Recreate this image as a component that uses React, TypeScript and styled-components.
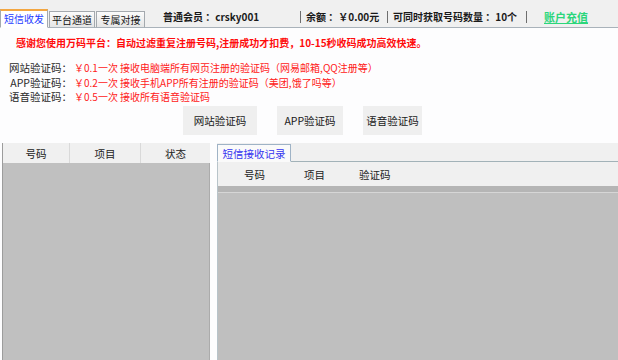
import React from 'react'
import styled, { createGlobalStyle } from 'styled-components'

const GlobalStyle = createGlobalStyle`
  html, body {
    margin: 0;
    padding: 0;
    background: #ffffff;
  }
  body {
    font-family: 'Noto Sans CJK SC', 'Liberation Sans', sans-serif;
  }
`

const Window = styled.div`
  width: 618px;
  height: 360px;
  display: flex;
  flex-direction: column;
  overflow: hidden;
  background: #fdfdfe;
`

const TopBar = styled.div`
  height: 27px;
  flex: none;
  display: flex;
  align-items: flex-end;
  background: #f0f0f0;
  border-bottom: 1px solid #a9b2ba;
`

const Tabs = styled.div`
  display: flex;
  align-items: flex-end;
  margin-bottom: -1px;
`

const Tab = styled.div<{ $active?: boolean; $w: number }>`
  width: ${(p) => p.$w}px;
  box-sizing: border-box;
  height: ${(p) => (p.$active ? 19 : 17)}px;
  margin-right: 1px;
  display: flex;
  align-items: center;
  justify-content: center;
  font-size: 10px;
  line-height: 12px;
  color: ${(p) => (p.$active ? '#1e3cff' : '#111')};
  background: ${(p) => (p.$active ? '#ffffff' : 'linear-gradient(#fbfbfb, #e6e6e6)')};
  border: 1px solid #a4a9ae;
  border-top: ${(p) => (p.$active ? '2px solid #f3a640' : '1px solid #a4a9ae')};
  border-bottom: ${(p) => (p.$active ? '1px solid #ffffff' : '1px solid #a9b2ba')};
`

const Status = styled.div`
  display: flex;
  align-items: center;
  height: 18px;
  margin-left: 17px;
  margin-bottom: 1px;
`

const StatusItem = styled.div<{ $w: number }>`
  width: ${(p) => p.$w}px;
  font-size: 10px;
  font-weight: 700;
  line-height: 14px;
  color: #1a1a1a;
  white-space: nowrap;
`

const Pipe = styled.span`
  width: 1px;
  height: 12px;
  margin: 0 5px 0 2px;
  background: #6e6e6e;
`

const Recharge = styled.a`
  margin-left: 12px;
  font-size: 11px;
  font-weight: 700;
  line-height: 14px;
  color: #2bd67b;
  text-decoration: underline;
  cursor: pointer;
`

const Info = styled.div`
  height: 115px;
  flex: none;
  box-sizing: border-box;
  padding-top: 8px;
  background: #fdfdfe;
`

const Notice = styled.div`
  padding-left: 16px;
  font-size: 10px;
  font-weight: 700;
  line-height: 14px;
  color: #ff0c0c;
  white-space: nowrap;
`

const Prices = styled.div`
  margin-top: 11px;
  display: grid;
  grid-template-columns: 72px auto;
  column-gap: 2px;
  line-height: 14.5px;
`

const PriceLabel = styled.div`
  font-size: 10.5px;
  color: #2a2a2a;
  text-align: right;
  white-space: nowrap;
`

const PriceText = styled.div`
  font-size: 10px;
  color: #ff2020;
  white-space: nowrap;
`

const Buttons = styled.div`
  display: flex;
  gap: 20px;
  margin-top: 1px;
  padding-left: 183px;
`

const Button = styled.button<{ $w: number }>`
  width: ${(p) => p.$w}px;
  height: 29px;
  padding: 0;
  border: none;
  background: #efefef;
  font-family: inherit;
  font-size: 10.5px;
  color: #1a1a1a;
  cursor: pointer;
`

const Bottom = styled.div`
  flex: 1;
  display: flex;
  gap: 7px;
  min-height: 0;
`

const LeftPanel = styled.div`
  width: 207px;
  margin-left: 2px;
  display: flex;
  flex-direction: column;
  border-left: 1px solid #9c9c9c;
`

const Header = styled.div`
  height: 20px;
  flex: none;
  display: flex;
  background: #f0f0f0;
`

const HeadCell = styled.div<{ $w: number }>`
  width: ${(p) => p.$w}px;
  box-sizing: border-box;
  display: flex;
  align-items: center;
  justify-content: center;
  font-size: 10.5px;
  color: #222;
  border-right: 1px solid #d9d9d9;
  &:last-child {
    border-right: none;
  }
`

const ListBody = styled.div`
  flex: 1;
  background: #c0c0c0;
  border-right: 1px solid #ababab;
`

const RightPanel = styled.div`
  flex: 1;
  display: flex;
  flex-direction: column;
`

const TabStrip = styled.div`
  height: 18px;
  flex: none;
  display: flex;
  align-items: flex-end;
  background: #f0f0f0;
`

const PanelTab = styled.div`
  width: 74px;
  height: 18px;
  box-sizing: border-box;
  display: flex;
  align-items: center;
  justify-content: center;
  margin-bottom: -1px;
  font-size: 10.5px;
  color: #3434f0;
  background: #fafafa;
  border: 1px solid #9fb3c6;
  border-bottom: 1px solid #fafafa;
  position: relative;
`

const PanelBody = styled.div`
  flex: 1;
  display: flex;
  flex-direction: column;
  border-top: 1px solid #a2b2b8;
  border-left: 1px solid #b8c4ca;
`

const RecordHeader = styled.div`
  height: 24px;
  flex: none;
  display: flex;
  align-items: center;
  background: #f0f0f0;
  font-size: 10.5px;
  color: #222;
`

const RecordCell = styled.div<{ $w?: number; $pad?: number }>`
  box-sizing: border-box;
  width: ${(p) => (p.$w ? `${p.$w}px` : 'auto')};
  padding-left: ${(p) => p.$pad || 0}px;
`

const Band = styled.div`
  height: 6px;
  flex: none;
  background: #b5b5b5;
  border-bottom: 1px solid #d6d6d6;
`

const RecordBody = styled.div`
  flex: 1;
  background: #bfbfbf;
`

const prices = [
  { label: '网站验证码：', text: '￥0.1一次  接收电脑端所有网页注册的验证码（网易邮箱,QQ注册等）' },
  { label: 'APP验证码：', text: '￥0.2一次  接收手机APP所有注册的验证码（美团,饿了吗等）' },
  { label: '语音验证码：', text: '￥0.5一次  接收所有语音验证码' },
]

const buttons = [
  { name: '网站验证码', w: 74 },
  { name: 'APP验证码', w: 66 },
  { name: '语音验证码', w: 59 },
]

const App = () => {
  return (
    <>
      <GlobalStyle />
      <Window>
        <TopBar>
          <Tabs>
            <Tab $active $w={48}>短信收发</Tab>
            <Tab $w={46}>平台通道</Tab>
            <Tab $w={49}>专属对接</Tab>
          </Tabs>
          <Status>
            <StatusItem $w={135}>普通会员 ：crsky001</StatusItem>
            <Pipe />
            <StatusItem $w={79}>余额 ：￥0.00元</StatusItem>
            <Pipe />
            <StatusItem $w={131}>可同时获取号码数量 ：10个</StatusItem>
            <Pipe />
            <Recharge>账户充值</Recharge>
          </Status>
        </TopBar>

        <Info>
          <Notice>感谢您使用万码平台：自动过滤重复注册号码,注册成功才扣费，10-15秒收码成功高效快速。</Notice>
          <Prices>
            {prices.map((item) => (
              <React.Fragment key={item.label}>
                <PriceLabel>{item.label}</PriceLabel>
                <PriceText>{item.text}</PriceText>
              </React.Fragment>
            ))}
          </Prices>
          <Buttons>
            {buttons.map((b) => (
              <Button key={b.name} $w={b.w}>
                {b.name}
              </Button>
            ))}
          </Buttons>
        </Info>

        <Bottom>
          <LeftPanel>
            <Header>
              <HeadCell $w={67}>号码</HeadCell>
              <HeadCell $w={71}>项目</HeadCell>
              <HeadCell $w={69}>状态</HeadCell>
            </Header>
            <ListBody />
          </LeftPanel>

          <RightPanel>
            <TabStrip>
              <PanelTab>短信接收记录</PanelTab>
            </TabStrip>
            <PanelBody>
              <RecordHeader>
                <RecordCell $w={86} $pad={26}>号码</RecordCell>
                <RecordCell $w={55}>项目</RecordCell>
                <RecordCell>验证码</RecordCell>
              </RecordHeader>
              <Band />
              <RecordBody />
            </PanelBody>
          </RightPanel>
        </Bottom>
      </Window>
    </>
  )
}

export default App
